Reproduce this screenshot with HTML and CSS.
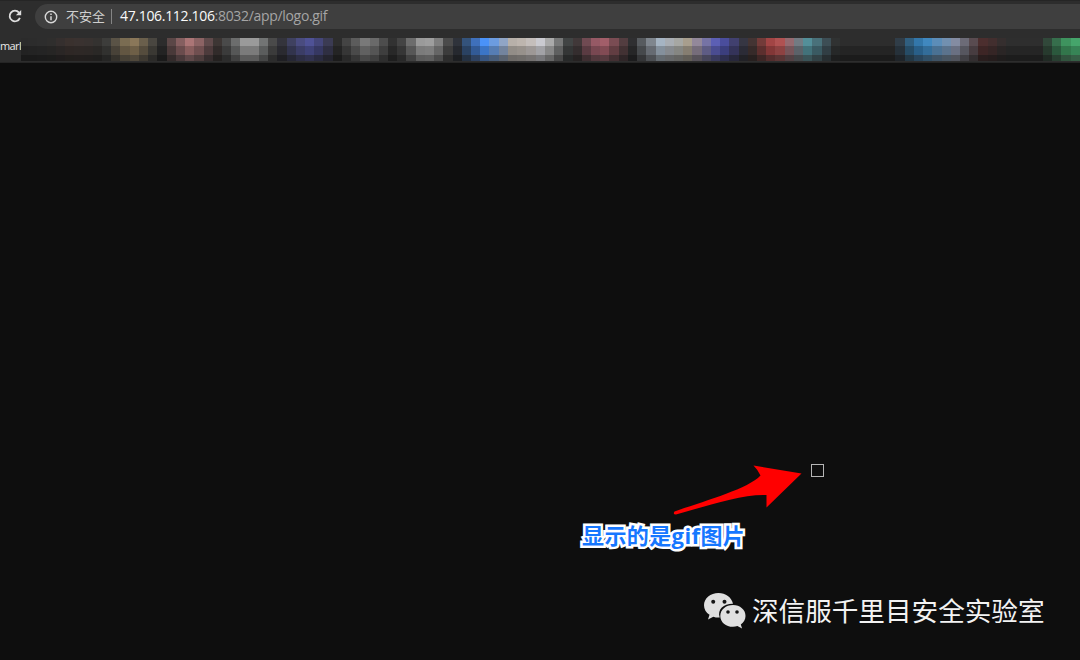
FILE: index.html
```html
<!DOCTYPE html>
<html lang="zh-CN">
<head>
<meta charset="utf-8">
<title>logo.gif</title>
<link rel="stylesheet" href="styles.css">
</head>
<body>
<header class="toolbar">
  <svg class="reload" width="14" height="14" viewBox="0 0 14 14"><path d="M11 3.600A5.300 5.300 0 1 0 11.900 8.900" fill="none" stroke="#dedede" stroke-width="1.8"/><path d="M13.200 1v5.300H7.900z" fill="#dedede"/></svg>
  <div class="address">
    <svg class="info" width="14" height="14" viewBox="0 0 14 14"><circle cx="7" cy="7" r="5.700" fill="none" stroke="#d8d8d8" stroke-width="1.4"/><path d="M7 6.200v4M7 3.600v1.500" stroke="#d8d8d8" stroke-width="1.5"/></svg>
    <span class="insecure">不安全</span>
    <span class="divider"></span>
    <span class="url"><span class="host">47.106.112.106</span>:8032/app/logo.gif</span>
  </div>
</header>
<nav class="bookmarks">
  <span class="mark">marl</span>
  <div class="mosaic" id="mosaic"></div>
</nav>
<main class="page">
  <span class="gif"></span>
  <svg class="arrow" width="136" height="56" viewBox="0 0 136 56"><path d="M4.500 51.500C34 41 78 29 90.500 15.500Q88 10 83.500 5.500L131.500 13.500L96.500 47.500V35C72 34 40 45 6 54.500Q2.500 54.500 4.500 51.500Z" fill="#f00"/></svg>
  <div class="caption">显示的是gif图片</div>
  <div class="watermark">
    <svg class="wechat" width="42" height="37" viewBox="0 0 42 37"><path d="M14.500 1C6.500 1 0 6.400 0 13.200c0 4 2 7.300 5.500 9.500L4 27.500l5.300-2.800c2 .7 4 .9 6.400.8C13 17 20 11.500 29 11.700 27.700 5.500 21.500 1 14.500 1Z" fill="#e0e0e0"/><path d="M29 13C21.800 13 16.300 17.800 16.300 23.900S21.800 34.800 29 34.800c1.600 0 3-.2 4.400-.7l4.700 2.300-1.300-4c3-2 4.700-5 4.700-8.500C41.500 17.800 36 13 29 13Z" fill="#e0e0e0"/><g fill="#151515"><circle cx="9.200" cy="9.800" r="2"/><circle cx="20.500" cy="9.800" r="2"/><circle cx="24" cy="20" r="1.800"/><circle cx="33" cy="20" r="1.800"/></g></svg>
    <span class="lab">深信服千里目安全实验室</span>
  </div>
</main>
<script src="mosaic.js"></script>
</body>
</html>
```
FILE: mosaic.js
```js
// Pixelated bookmark bar: one colour per column, shaded over three rows.
const columns = (
  "2b2b2b 2c2c2c 2d2d2d 2f2e2d 352f2e 3a312e 3a3230 383230 343230 3d3d3b " +
  "5a5346 7a6c52 8a7759 6a5f4c 494640 2c2c2c 5b4747 855f60 ab7576 8c6364 604a4b 3d3634 " +
  "4a4a4a 6c6d6d 9a9a9a 9a9a9a 727474 4a4a4a 34343c 3f4160 4a4c80 4f5296 44467a 3b3b53 2d2d2d " +
  "444444 5c5c5c 797979 6a6a6a 4d4d4d 323232 444444 6d6d6d 9a9a9a 9e9e9e 7f7f7f 4b4b4b 2f333b " +
  "34537b 3f70bb 4a92f8 6c9ce0 90a5c6 b7b0a9 bdb5ae c4bebb cacad0 aaaaaa 777878 414444 " +
  "413839 704a52 965965 a25e69 7a4c53 533d40 2f2f31 575b5f 7f868e a5b4c3 a8adb3 a6a7a3 a89e8d 93889a " +
  "7673a5 5c5fb4 4a4d9c 41406f 363643 443433 733b39 a24545 b05252 956a70 727b83 538f99 49717a 3d4e55 303232 " +
  "2d2d2d 2d2d2d 2d2d2d 2d2d2d 2d2d2d 2d2d2d 303d48 305f80 3377aa 4088bf 5c8db8 7290b0 848ca2 6c6b77 594b50 " +
  "4c2e2e 422e2e 352e2e 2e2e2e 2e2e2e 2e2e2e 2e2e2e 31483a 366e4c 3e935e 45a56b"
).split(" ");
const mosaic = document.getElementById("mosaic");
for (const shade of ["top", "middle", "bottom"]) {
  const row = document.createElement("div");
  row.className = "mosaic-row " + shade;
  const stops = columns.map((c, i) => {
    const start = Math.round(i * 9.225 - 2);
    const end = Math.round((i + 1) * 9.225 - 2);
    return `#${c} ${start}px ${end}px`;
  });
  row.style.backgroundImage = `linear-gradient(90deg, ${stops.join(",")})`;
  mosaic.append(row);
}
```
FILE: styles.css
```css
* { box-sizing: border-box; }
body { margin: 0; width: 1080px; height: 660px; overflow: hidden; background: #0e0e0e; font-family: "Open Sans", "Noto Sans CJK SC", sans-serif; display: flex; flex-direction: column; }
.toolbar { height: 33px; flex: none; display: flex; align-items: flex-start; padding: 3px 0 0 8px; gap: 13px; background: #2d2d2d; border-top: 1px solid #252525; }
.reload { margin-top: 5px; flex: none; }
.address { flex: 1; height: 25px; display: flex; align-items: center; background: #3f3f3f; border-radius: 13px 0 0 13px; padding-left: 9px; white-space: nowrap; font-size: 14px; line-height: 22px; color: #a5a5a5; }
.info { flex: none; margin-right: 8px; }
.insecure { color: #cfcfcf; font-size: 13px; width: 45px; padding-bottom: 2px; }
.divider { width: 1px; height: 15px; background: #858585; margin-right: 8px; }
.url { padding-bottom: 2px; letter-spacing: -0.32px; }
.host { color: #fafafa; }
.bookmarks { height: 30px; flex: none; display: flex; background: #2d2d2d; border-bottom: 1px solid #252525; }
.mark { width: 21px; margin-top: 5px; flex: none; color: #e9e9e9; font-size: 11px; line-height: 16px; letter-spacing: -0.6px; white-space: nowrap; }
.mosaic { flex: 1; padding-top: 5px; }
.mosaic-row { height: 8px; }
.middle { height: 9px; filter: brightness(.8); }
.bottom { height: 6px; filter: saturate(.7) brightness(.6); }
.page { position: relative; flex: 1; }
.gif { position: absolute; left: 811px; top: 401px; width: 13px; height: 13px; border: 1px solid #b5b5b5; }
.arrow { position: absolute; left: 670px; top: 397px; }
.caption { position: absolute; left: 582px; top: 457px; font: bold 22px/30px "Open Sans", "Noto Sans CJK SC", sans-serif; letter-spacing: .4px; color: #1677ff; -webkit-text-stroke: 5px #fff; stroke-linejoin: round; paint-order: stroke fill; white-space: nowrap; }
.watermark { position: absolute; left: 704px; top: 528px; display: flex; align-items: center; gap: 6px; white-space: nowrap; }
.lab { font: 26.600px/38px "Noto Sans CJK SC", sans-serif; color: #f3f3f3; }
```
